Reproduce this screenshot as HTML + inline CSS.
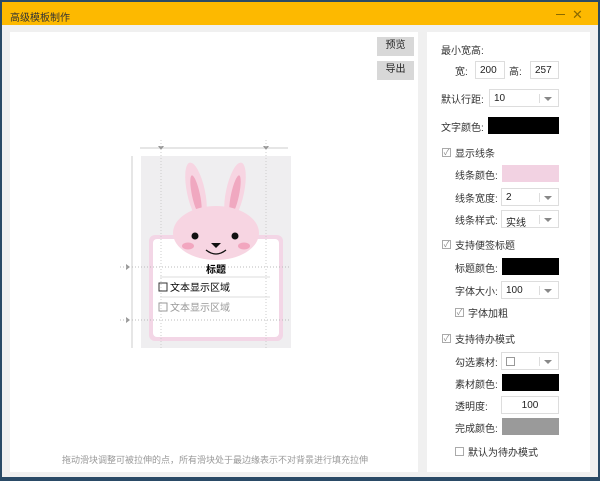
<!DOCTYPE html><html><head><meta charset="utf-8"><style>
*{margin:0;padding:0;box-sizing:border-box}
body{width:600px;height:481px;background:#2a4a66;font-family:"Liberation Sans","Noto Sans CJK SC",sans-serif;font-size:10px;color:#222;position:relative;overflow:hidden}
.win{position:absolute;left:2px;top:2px;width:596px;height:475px;background:#f0f0f0}
.title{position:absolute;left:0;top:0;width:596px;height:23px;background:#fdb900;font-size:10px;padding:7px 0 0 8px;color:#333}
.a{position:absolute}
.panel{position:absolute;background:#fff}
.lbl{position:absolute;font-size:10px;color:#333}
.inp{position:absolute;border:1px solid #ddd;background:#fff;font-size:10px;padding:3px 4px;height:18px}
.dd::after{content:"";position:absolute;right:6px;top:7px;border-left:4px solid transparent;border-right:4px solid transparent;border-top:4px solid #888}
.dd::before{content:"";position:absolute;right:18px;top:4px;width:1px;height:9px;background:#ddd}
.blk{position:absolute;background:#000;height:17px}
.cb{position:absolute;width:9px;height:9px;border:1px solid #aaa;font-size:8px;line-height:7px;text-align:center;color:#888}
.btn{position:absolute;background:#d8d8d8;font-size:10px;text-align:center;line-height:18px;width:37px;height:19px}
</style></head><body>
<div class="win">
<div class="title">高级模板制作</div>
<div class="a" style="left:554px;top:12px;width:9px;height:1px;background:#8a6a00"></div>
<div class="a" style="left:570px;top:5px;font-size:13px;color:#8a6a00">✕</div>
<div class="panel" style="left:8px;top:30px;width:408px;height:440px"></div>
<div class="panel" style="left:425px;top:30px;width:163px;height:440px"></div>
</div>
<div class="btn" style="left:377px;top:37px">预览</div>
<div class="btn" style="left:377px;top:61px">导出</div>
<svg class="a" style="left:120px;top:140px" width="180" height="220">
<line x1="20" y1="8" x2="168" y2="8" stroke="#ccc"/>
<line x1="12" y1="16" x2="12" y2="208" stroke="#ccc"/>
<rect x="21" y="16" width="150" height="192" fill="#efeef0"/>
<path d="M38 6 l3 4 l3 -4z M143 6 l3 4 l3 -4z" fill="#999"/>
<path d="M6 124 l4 3 l-4 3z M6 177 l4 3 l-4 3z" fill="#999"/>
<rect x="29" y="95" width="134" height="106" rx="6" fill="#f3d6e6"/>
<rect x="33" y="99" width="126" height="98" rx="4" fill="#fff"/>
<ellipse cx="76" cy="52" rx="9" ry="30" fill="#f7d5e2" transform="rotate(-12 76 52)"/>
<ellipse cx="115" cy="52" rx="9" ry="30" fill="#f7d5e2" transform="rotate(12 115 52)"/>
<ellipse cx="76" cy="55" rx="4" ry="20" fill="#f0a8c0" transform="rotate(-12 76 55)"/>
<ellipse cx="115" cy="55" rx="4" ry="20" fill="#f0a8c0" transform="rotate(12 115 55)"/>
<ellipse cx="96" cy="93" rx="43" ry="27" fill="#f7d5e2"/>
<circle cx="75" cy="96" r="3.5" fill="#111"/><circle cx="115" cy="96" r="3.5" fill="#111"/>
<ellipse cx="68" cy="106" rx="6" ry="3.5" fill="#f2a6bf"/><ellipse cx="124" cy="106" rx="6" ry="3.5" fill="#f2a6bf"/>
<path d="M91 103 h10 l-5 5z" fill="#111"/>
<path d="M86 110 q10 8 20 0" stroke="#111" stroke-width="1.3" fill="none"/>
<line x1="0" y1="127" x2="170" y2="127" stroke="#bbb" stroke-dasharray="1 2"/>
<line x1="0" y1="180" x2="170" y2="180" stroke="#bbb" stroke-dasharray="1 2"/>
<line x1="41" y1="0" x2="41" y2="210" stroke="#ccc" stroke-dasharray="1 2"/>
<line x1="146" y1="0" x2="146" y2="210" stroke="#ccc" stroke-dasharray="1 2"/>
<line x1="40" y1="137" x2="150" y2="137" stroke="#ddd"/>
<line x1="40" y1="157" x2="150" y2="157" stroke="#ddd"/>
<text x="96" y="133" text-anchor="middle" font-size="10" font-weight="bold" font-family="Liberation Sans,Noto Sans CJK SC,sans-serif">标题</text>
<rect x="39" y="143" width="8" height="8" fill="none" stroke="#333"/>
<text x="50" y="151" font-size="10" font-family="Liberation Sans,Noto Sans CJK SC,sans-serif">文本显示区域</text>
<rect x="39" y="163" width="8" height="8" fill="none" stroke="#999"/>
<text x="50" y="171" font-size="10" fill="#999" font-family="Liberation Sans,Noto Sans CJK SC,sans-serif">文本显示区域</text>
</svg>
<div class="lbl" style="left:62px;top:453px;color:#999;font-size:9px">拖动滑块调整可被拉伸的点，所有滑块处于最边缘表示不对背景进行填充拉伸</div>
<div class="lbl" style="left:441px;top:42px">最小宽高:</div>
<div class="lbl" style="left:455px;top:63px">宽:</div>
<div class="inp" style="left:475px;top:61px;width:30px">200</div>
<div class="lbl" style="left:509px;top:63px">高:</div>
<div class="inp" style="left:530px;top:61px;width:29px">257</div>
<div class="lbl" style="left:441px;top:91px">默认行距:</div>
<div class="inp dd" style="left:489px;top:89px;width:70px">10</div>
<div class="lbl" style="left:441px;top:119px">文字颜色:</div>
<div class="blk" style="left:488px;top:117px;width:71px"></div>
<div class="cb" style="left:442px;top:148px">✓</div><div class="lbl" style="left:455px;top:145px">显示线条</div>
<div class="lbl" style="left:455px;top:167px">线条颜色:</div>
<div class="a" style="left:502px;top:165px;width:57px;height:17px;background:#f2d2e2"></div>
<div class="lbl" style="left:455px;top:190px">线条宽度:</div>
<div class="inp dd" style="left:501px;top:188px;width:58px">2</div>
<div class="lbl" style="left:455px;top:212px">线条样式:</div>
<div class="inp dd" style="left:501px;top:210px;width:58px">实线</div>
<div class="cb" style="left:442px;top:240px">✓</div><div class="lbl" style="left:455px;top:237px">支持便签标题</div>
<div class="lbl" style="left:455px;top:260px">标题颜色:</div>
<div class="blk" style="left:502px;top:258px;width:57px"></div>
<div class="lbl" style="left:455px;top:283px">字体大小:</div>
<div class="inp dd" style="left:501px;top:281px;width:58px">100</div>
<div class="cb" style="left:455px;top:308px">✓</div><div class="lbl" style="left:468px;top:305px">字体加粗</div>
<div class="cb" style="left:442px;top:334px">✓</div><div class="lbl" style="left:455px;top:331px">支持待办模式</div>
<div class="lbl" style="left:455px;top:354px">勾选素材:</div>
<div class="inp dd" style="left:501px;top:352px;width:58px"><span style="display:inline-block;width:9px;height:9px;border:1px solid #999;margin-top:1px"></span></div>
<div class="lbl" style="left:455px;top:376px">素材颜色:</div>
<div class="blk" style="left:502px;top:374px;width:57px"></div>
<div class="lbl" style="left:455px;top:398px">透明度:</div>
<div class="inp" style="left:501px;top:396px;width:58px;text-align:center">100</div>
<div class="lbl" style="left:455px;top:420px">完成颜色:</div>
<div class="a" style="left:502px;top:418px;width:57px;height:17px;background:#9a9a9a"></div>
<div class="cb" style="left:455px;top:447px"></div><div class="lbl" style="left:468px;top:444px">默认为待办模式</div>
</body></html>
